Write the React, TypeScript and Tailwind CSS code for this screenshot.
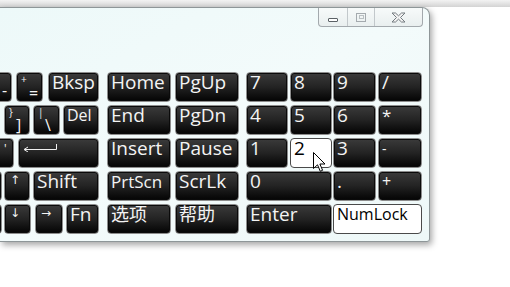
import React from 'react';

type KeyProps = {
  className: string;
  light?: boolean;
  children?: React.ReactNode;
};

function Key({ className, light, children }: KeyProps) {
  return (
    <div
      className={`shrink-0 h-[30px] rounded-[4px] border ${
        light
          ? 'border-[#4a4a4a] bg-white text-black'
          : 'border-[#8c8c8c] bg-linear-to-b from-[#3b3b3b] via-[#232323] to-[#050505] text-[#f4f4f4] shadow-[inset_0_0_0_1px_#0a0a0a]'
      } ${className}`}
    >
      {children}
    </div>
  );
}

function Label({ text, size = 'text-[19px]' }: { text: string; size?: string }) {
  return <div className={`pl-[3px] leading-[19px] whitespace-nowrap ${size}`}>{text}</div>;
}

function Dual({ small, main, pad }: { small: string; main: string; pad: string }) {
  return (
    <div className="flex flex-col">
      <div className="pl-[4px] text-[10px] leading-[12px]">{small}</div>
      <div className={`text-[16px] leading-[15px] ${pad}`}>{main}</div>
    </div>
  );
}

function Arrow({ glyph }: { glyph: string }) {
  return <div className="pl-[5px] pt-[1px] text-[12px] leading-[14px] font-['DejaVu_Sans',sans-serif]">{glyph}</div>;
}

function EnterGlyph() {
  return (
    <svg width="36" height="10" viewBox="0 0 36 10" className="ml-[4px] mt-[3px]">
      <path d="M1.5 7.5 H33.5 V2" fill="none" stroke="#f0f0f0" strokeWidth="1" />
      <path d="M1 7.5 L5 5 M1 7.5 L5 10" fill="none" stroke="#f0f0f0" strokeWidth="1" />
    </svg>
  );
}

function Cursor() {
  return (
    <svg width="13" height="21" viewBox="0 0 13 21" className="absolute left-[313px] top-[152px]">
      <path
        d="M0.5 0.5 L0.5 16.5 L4.5 12.8 L7.3 19.3 L9.6 18.3 L6.9 12 L12 12 Z"
        fill="#ffffff"
        stroke="#000000"
        strokeWidth="1"
        strokeLinejoin="round"
      />
    </svg>
  );
}

function TitleButtons() {
  return (
    <div className="flex h-[19px] mr-[6px] border border-t-0 border-[#a3a9ad] rounded-b-[4px] bg-linear-to-b from-[#f7fafa] to-[#e9efef] overflow-hidden">
      <div className="w-[29px] flex items-end justify-center pb-[4px] border-r border-[#c2c8cb]">
        <div className="w-[10px] h-[4px] border border-[#5b6166] rounded-[1px] bg-white" />
      </div>
      <div className="w-[27px] flex items-center justify-center border-r border-[#c2c8cb]">
        <div className="w-[10px] h-[9px] border border-[#a4aaae] flex items-center justify-center">
          <div className="w-[5px] h-[4px] border border-[#b9bfc2]" />
        </div>
      </div>
      <div className="w-[47px] flex items-center justify-center">
        <svg width="15" height="11" viewBox="0 0 15 11">
          <path
            d="M1 1 H4.5 L7.5 3.8 L10.5 1 H14 L9.5 5.5 L14 10 H10.5 L7.5 7.2 L4.5 10 H1 L5.5 5.5 Z"
            fill="#f3f3f3"
            stroke="#737a7f"
            strokeWidth="1"
            strokeLinejoin="round"
          />
        </svg>
      </div>
    </div>
  );
}

export default function App() {
  return (
    <div className="relative w-[510px] h-[287px] bg-white overflow-hidden font-['Open_Sans','Noto_Sans_CJK_SC',sans-serif]">
      <div className="h-[7px] bg-linear-to-b from-[#f3f3f3] to-[#d3d3d3]" />
      <div className="w-[430px] h-[235px] border-t border-r border-b border-[#8e9698] rounded-tr-[8px] rounded-br-[3px] bg-linear-to-br from-[#edf9f9] via-[#f3fbfb] to-[#eef8f8] shadow-[2px_3px_6px_rgba(0,0,0,0.35)] flex flex-col">
        <div className="flex justify-end">
          <TitleButtons />
        </div>

        <div className="mt-[45px] flex flex-col gap-[3px]">
          {/* row 1 */}
          <div className="flex">
            <div className="w-[99px] flex justify-end">
              <Key className="w-[30px]">
                <div className="pl-[19px] pt-[8px] text-[16px] leading-[18px]">-</div>
              </Key>
              <Key className="w-[27px] ml-[4px]">
                <Dual small="+" main="=" pad="pl-[12px] mt-[1px]" />
              </Key>
              <Key className="w-[51px] ml-[5px]">
                <Label text="Bksp" />
              </Key>
            </div>
            <Key className="w-[64px] ml-[8px]">
              <Label text="Home" />
            </Key>
            <Key className="w-[64px] ml-[4px]">
              <Label text="PgUp" />
            </Key>
            <Key className="w-[42px] ml-[7px]">
              <Label text="7" />
            </Key>
            <Key className="w-[42px] ml-[2px]">
              <Label text="8" />
            </Key>
            <Key className="w-[43px] ml-[1px]">
              <Label text="9" />
            </Key>
            <Key className="w-[44px] ml-[2px]">
              <Label text="/" />
            </Key>
          </div>

          {/* row 2 */}
          <div className="flex">
            <div className="w-[99px] flex justify-end">
              <Key className="w-[26px]">
                <Dual small="}" main="]" pad="pl-[11px]" />
              </Key>
              <Key className="w-[27px] ml-[3px]">
                <Dual small="|" main="\" pad="pl-[11px]" />
              </Key>
              <Key className="w-[36px] ml-[3px]">
                <Label text="Del" size="text-[16px]" />
              </Key>
            </div>
            <Key className="w-[64px] ml-[8px]">
              <Label text="End" />
            </Key>
            <Key className="w-[64px] ml-[4px]">
              <Label text="PgDn" />
            </Key>
            <Key className="w-[42px] ml-[7px]">
              <Label text="4" />
            </Key>
            <Key className="w-[42px] ml-[2px]">
              <Label text="5" />
            </Key>
            <Key className="w-[43px] ml-[1px]">
              <Label text="6" />
            </Key>
            <Key className="w-[44px] ml-[2px]">
              <Label text="*" size="text-[17px]" />
            </Key>
          </div>

          {/* row 3 */}
          <div className="flex">
            <div className="w-[99px] flex justify-end">
              <Key className="w-[30px]">
                <div className="pl-[19px] pt-[3px] text-[12px] leading-[14px]">'</div>
              </Key>
              <Key className="w-[81px] ml-[4px]">
                <EnterGlyph />
              </Key>
            </div>
            <Key className="w-[64px] ml-[8px]">
              <Label text="Insert" />
            </Key>
            <Key className="w-[64px] ml-[4px]">
              <Label text="Pause" />
            </Key>
            <Key className="w-[42px] ml-[7px]">
              <Label text="1" />
            </Key>
            <Key className="w-[42px] ml-[2px]" light>
              <Label text="2" />
            </Key>
            <Key className="w-[43px] ml-[1px]">
              <Label text="3" />
            </Key>
            <Key className="w-[44px] ml-[2px]">
              <Label text="-" size="text-[14px]" />
            </Key>
          </div>

          {/* row 4 */}
          <div className="flex">
            <div className="w-[99px] flex justify-end">
              <Key className="w-[20px]" />
              <Key className="w-[26px] ml-[2px]">
                <Arrow glyph="↑" />
              </Key>
              <Key className="w-[66px] ml-[3px]">
                <Label text="Shift" />
              </Key>
            </div>
            <Key className="w-[64px] ml-[8px]">
              <Label text="PrtScn" size="text-[17px]" />
            </Key>
            <Key className="w-[64px] ml-[4px]">
              <Label text="ScrLk" />
            </Key>
            <Key className="w-[86px] ml-[7px]">
              <Label text="0" />
            </Key>
            <Key className="w-[43px] ml-[1px]">
              <Label text="." />
            </Key>
            <Key className="w-[44px] ml-[2px]">
              <Label text="+" size="text-[16px]" />
            </Key>
          </div>

          {/* row 5 */}
          <div className="flex">
            <div className="w-[99px] flex justify-end">
              <Key className="w-[20px]" />
              <Key className="w-[27px] ml-[2px]">
                <Arrow glyph="↓" />
              </Key>
              <Key className="w-[28px] ml-[4px]">
                <Arrow glyph="→" />
              </Key>
              <Key className="w-[33px] ml-[3px]">
                <Label text="Fn" />
              </Key>
            </div>
            <Key className="w-[64px] ml-[8px]">
              <Label text="选项" size="text-[18px]" />
            </Key>
            <Key className="w-[64px] ml-[4px]">
              <Label text="帮助" size="text-[18px]" />
            </Key>
            <Key className="w-[86px] ml-[7px]">
              <Label text="Enter" />
            </Key>
            <Key className="w-[89px] ml-[1px]" light>
              <Label text="NumLock" size="text-[16px]" />
            </Key>
          </div>
        </div>
      </div>
      <Cursor />
    </div>
  );
}
